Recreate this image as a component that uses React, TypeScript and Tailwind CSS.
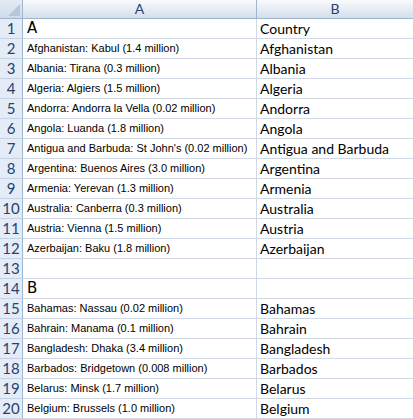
const rows: { a: string; b: string; big?: boolean }[] = [
  { a: "A", b: "Country", big: true },
  { a: "Afghanistan: Kabul (1.4 million)", b: "Afghanistan" },
  { a: "Albania: Tirana (0.3 million)", b: "Albania" },
  { a: "Algeria: Algiers (1.5 million)", b: "Algeria" },
  { a: "Andorra: Andorra la Vella (0.02 million)", b: "Andorra" },
  { a: "Angola: Luanda (1.8 million)", b: "Angola" },
  { a: "Antigua and Barbuda: St John's (0.02 million)", b: "Antigua and Barbuda" },
  { a: "Argentina: Buenos Aires (3.0 million)", b: "Argentina" },
  { a: "Armenia: Yerevan (1.3 million)", b: "Armenia" },
  { a: "Australia: Canberra (0.3 million)", b: "Australia" },
  { a: "Austria: Vienna (1.5 million)", b: "Austria" },
  { a: "Azerbaijan: Baku (1.8 million)", b: "Azerbaijan" },
  { a: "", b: "" },
  { a: "B", b: "", big: true },
  { a: "Bahamas: Nassau (0.02 million)", b: "Bahamas" },
  { a: "Bahrain: Manama (0.1 million)", b: "Bahrain" },
  { a: "Bangladesh: Dhaka (3.4 million)", b: "Bangladesh" },
  { a: "Barbados: Bridgetown (0.008 million)", b: "Barbados" },
  { a: "Belarus: Minsk (1.7 million)", b: "Belarus" },
  { a: "Belgium: Brussels (1.0 million)", b: "Belgium" },
];

const App = () => {
  return (
    <div className="w-[413px] h-[419px] overflow-hidden bg-white">
      {/* column headers */}
      <div className="flex h-[19px] border-b border-[#9eb6ce] bg-gradient-to-b from-[#f9fbfd] to-[#d5deeb] text-[#27426f] text-[14px] font-['Lato',sans-serif]">
        <div className="w-[23px] shrink-0 border-r border-[#9eb6ce] bg-gradient-to-b from-[#e4ebf5] to-[#cfdbea] relative">
          <div className="absolute right-[2px] bottom-[2px] w-0 h-0 border-l-[12px] border-l-transparent border-b-[12px] border-b-[#b6c7dc]" />
        </div>
        <div className="w-[234px] shrink-0 border-r border-[#9eb6ce] flex items-center justify-center leading-none">A</div>
        <div className="flex-1 flex items-center justify-center leading-none">B</div>
      </div>

      {/* data rows */}
      {rows.map((r, i) => (
        <div key={i} className="flex h-[20px]">
          <div className="w-[23px] shrink-0 bg-[#e4ecf7] border-r border-[#9eb6ce] border-b border-b-[#c5d2e3] flex items-center justify-center text-[#27426f] text-[15px] font-['Lato',sans-serif] leading-none">
            {i + 1}
          </div>
          <div
            className={`w-[234px] shrink-0 border-r border-b border-[#d0d7e5] flex items-center pl-[4px] whitespace-nowrap overflow-hidden text-black leading-none ${
              r.big ? "text-[15px] font-['DejaVu_Sans',sans-serif]" : "text-[11px] font-['Liberation_Sans',sans-serif]"
            }`}
          >
            {r.a}
          </div>
          <div className="flex-1 border-b border-[#d0d7e5] flex items-center pl-[3px] whitespace-nowrap overflow-hidden text-black text-[14px] font-['Lato',sans-serif] leading-none">
            {r.b}
          </div>
        </div>
      ))}
    </div>
  );
};

export default App;
